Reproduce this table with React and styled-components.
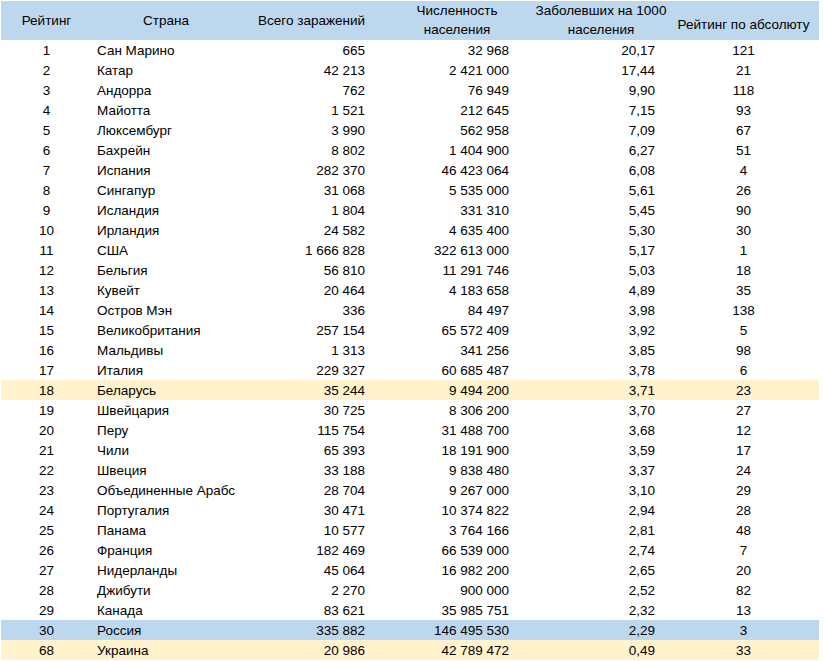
import React from 'react';
import styled, { createGlobalStyle } from 'styled-components';

const GlobalStyle = createGlobalStyle`
  html, body {
    margin: 0;
    padding: 0;
    background: #ffffff;
  }
  body {
    font-family: 'Liberation Sans', Arial, sans-serif;
    color: #000000;
  }
`;

const COLS = '91px 148px 128px 144px 156px 151px';

const StyledSheet = styled.div`
  padding: 1px 0 0 1px;
  width: 818px;
`;

const StyledHeader = styled.div`
  display: grid;
  grid-template-columns: ${COLS};
  height: 39px;
  background: #bdd7ee;
`;

const StyledHeadCell = styled.div`
  display: flex;
  flex-direction: column;
  justify-content: ${(p) => p.$valign || 'center'};
  align-items: ${(p) => p.$align || 'center'};
  padding: ${(p) => p.$pad || '0'};
  font-size: 13.5px;
  line-height: 19px;
  white-space: nowrap;
`;

const StyledRow = styled.div`
  display: grid;
  grid-template-columns: ${COLS};
  height: 20px;
  background: ${(p) =>
    p.$mark === 'yellow' ? '#fff2cc' : p.$mark === 'blue' ? '#bdd7ee' : 'transparent'};
`;

const StyledCell = styled.div`
  font-size: 13.5px;
  line-height: 20px;
  padding-top: 1px;
  white-space: nowrap;
  overflow: hidden;
  text-align: ${(p) => p.$align || 'left'};
  padding-left: ${(p) => p.$pl || 0}px;
  padding-right: ${(p) => p.$pr || 0}px;
`;

// the long name is cut by the next cell, as in the sheet
const rows = [
  [1, 'Сан Марино', '665', '32 968', '20,17', 121],
  [2, 'Катар', '42 213', '2 421 000', '17,44', 21],
  [3, 'Андорра', '762', '76 949', '9,90', 118],
  [4, 'Майотта', '1 521', '212 645', '7,15', 93],
  [5, 'Люксембург', '3 990', '562 958', '7,09', 67],
  [6, 'Бахрейн', '8 802', '1 404 900', '6,27', 51],
  [7, 'Испания', '282 370', '46 423 064', '6,08', 4],
  [8, 'Сингапур', '31 068', '5 535 000', '5,61', 26],
  [9, 'Исландия', '1 804', '331 310', '5,45', 90],
  [10, 'Ирландия', '24 582', '4 635 400', '5,30', 30],
  [11, 'США', '1 666 828', '322 613 000', '5,17', 1],
  [12, 'Бельгия', '56 810', '11 291 746', '5,03', 18],
  [13, 'Кувейт', '20 464', '4 183 658', '4,89', 35],
  [14, 'Остров Мэн', '336', '84 497', '3,98', 138],
  [15, 'Великобритания', '257 154', '65 572 409', '3,92', 5],
  [16, 'Мальдивы', '1 313', '341 256', '3,85', 98],
  [17, 'Италия', '229 327', '60 685 487', '3,78', 6],
  [18, 'Беларусь', '35 244', '9 494 200', '3,71', 23, 'yellow'],
  [19, 'Швейцария', '30 725', '8 306 200', '3,70', 27],
  [20, 'Перу', '115 754', '31 488 700', '3,68', 12],
  [21, 'Чили', '65 393', '18 191 900', '3,59', 17],
  [22, 'Швеция', '33 188', '9 838 480', '3,37', 24],
  [23, 'Объединенные Арабс', '28 704', '9 267 000', '3,10', 29],
  [24, 'Португалия', '30 471', '10 374 822', '2,94', 28],
  [25, 'Панама', '10 577', '3 764 166', '2,81', 48],
  [26, 'Франция', '182 469', '66 539 000', '2,74', 7],
  [27, 'Нидерланды', '45 064', '16 982 200', '2,65', 20],
  [28, 'Джибути', '2 270', '900 000', '2,52', 82],
  [29, 'Канада', '83 621', '35 985 751', '2,32', 13],
  [30, 'Россия', '335 882', '146 495 530', '2,29', 3, 'blue'],
  [68, 'Украина', '20 986', '42 789 472', '0,49', 33, 'yellow'],
];

const nb = (s) => s.replace(/ /g, '\u00a0');

const App = () => {
  return (
    <StyledSheet>
      <GlobalStyle />
      <StyledHeader>
        <StyledHeadCell>Рейтинг</StyledHeadCell>
        <StyledHeadCell>Страна</StyledHeadCell>
        <StyledHeadCell $align="flex-end" $pad="0 3px 0 0">
          Всего заражений
        </StyledHeadCell>
        <StyledHeadCell $valign="flex-start" $pad="0 0 0 34px">
          <span>Численность</span>
          <span>населения</span>
        </StyledHeadCell>
        <StyledHeadCell $valign="flex-start" $pad="0 0 0 22px">
          <span>Заболевших на 1000</span>
          <span>населения</span>
        </StyledHeadCell>
        <StyledHeadCell $pad="7px 0 0 0">Рейтинг по абсолюту</StyledHeadCell>
      </StyledHeader>
      {rows.map((r) => (
        <StyledRow key={r[0]} $mark={r[6]}>
          <StyledCell $align="center">{r[0]}</StyledCell>
          <StyledCell $pl={5}>{r[1]}</StyledCell>
          <StyledCell $align="right" $pr={3}>{nb(r[2])}</StyledCell>
          <StyledCell $align="right" $pr={3}>{nb(r[3])}</StyledCell>
          <StyledCell $align="right" $pr={13}>{r[4]}</StyledCell>
          <StyledCell $align="center">{r[5]}</StyledCell>
        </StyledRow>
      ))}
    </StyledSheet>
  );
};

export default App;
